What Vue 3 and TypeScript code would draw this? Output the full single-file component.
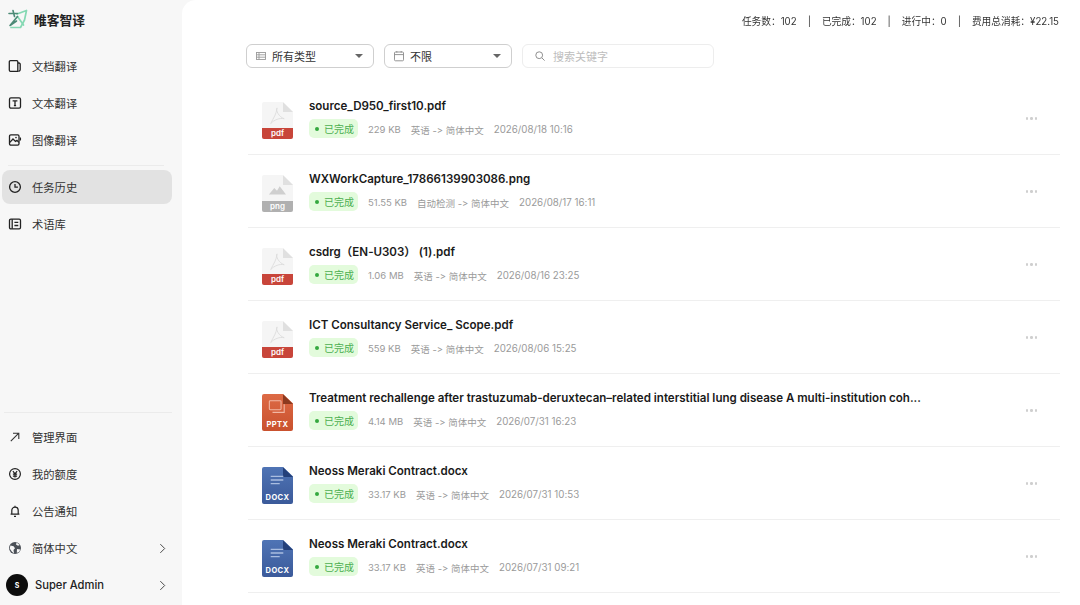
<script setup lang="ts">
type Kind = 'pdf' | 'png' | 'pptx' | 'docx'
interface Task { name: string; kind: Kind; size: string; langs: string; date: string }

const tasks: Task[] = [
  { name: 'source_D950_first10.pdf', kind: 'pdf', size: '229 KB', langs: '英语 -> 简体中文', date: '2026/08/18 10:16' },
  { name: 'WXWorkCapture_17866139903086.png', kind: 'png', size: '51.55 KB', langs: '自动检测 -> 简体中文', date: '2026/08/17 16:11' },
  { name: 'csdrg（EN-U303） (1).pdf', kind: 'pdf', size: '1.06 MB', langs: '英语 -> 简体中文', date: '2026/08/16 23:25' },
  { name: 'ICT Consultancy Service_ Scope.pdf', kind: 'pdf', size: '559 KB', langs: '英语 -> 简体中文', date: '2026/08/06 15:25' },
  { name: 'Treatment rechallenge after trastuzumab-deruxtecan–related interstitial lung disease A multi-institution coh...', kind: 'pptx', size: '4.14 MB', langs: '英语 -> 简体中文', date: '2026/07/31 16:23' },
  { name: 'Neoss Meraki Contract.docx', kind: 'docx', size: '33.17 KB', langs: '英语 -> 简体中文', date: '2026/07/31 10:53' },
  { name: 'Neoss Meraki Contract.docx', kind: 'docx', size: '33.17 KB', langs: '英语 -> 简体中文', date: '2026/07/31 09:21' },
]
const stats = ['任务数：102', '已完成：102', '进行中：0', '费用总消耗：¥22.15']
</script>

<template>
  <div class="app">
    <aside class="side">
      <div class="brand">
        <svg class="logo" width="20" height="20" viewBox="0 0 20 20" fill="none" stroke-linecap="round" stroke-linejoin="round">
          <path d="M9 5L18.500 1.500L16.500 11L12.500 18.500H3" stroke="#86d9b4" stroke-width="1.700" />
          <path d="M9.500 7.500L15.500 16" stroke="#86d9b4" stroke-width="1.700" />
          <path d="M1 4.500H9.500M5 1.500L6.500 7.500M9.500 7.500L2 16.500L8.500 12" stroke="#4c8a76" stroke-width="1.600" />
        </svg>
        <span>唯客智译</span>
      </div>

      <nav class="nav top">
        <a class="item">
          <svg class="ic" viewBox="0 0 14 14" fill="none" stroke="#222" stroke-width="1.300"><path d="M2.500 1.700H8.800A1 1 0 0 1 9.800 2.700V12.300H2.500A1.200 1.200 0 0 1 1.300 11.100V2.900A1.200 1.200 0 0 1 2.500 1.700Z" /><path d="M10 4H11A1.200 1.200 0 0 1 12.200 5.200V10.500A1.700 1.700 0 0 1 10.400 12.200" /></svg>
          文档翻译
        </a>
        <a class="item">
          <svg class="ic" viewBox="0 0 14 14" fill="none" stroke="#222" stroke-width="1.300"><rect x="1.500" y="1.900" width="11" height="10.200" rx="1.400" /><path d="M4.600 4.900H9.400M7 4.900V9.600M5.900 9.600H8.100" /></svg>
          文本翻译
        </a>
        <a class="item">
          <svg class="ic" viewBox="0 0 14 14" fill="none" stroke="#222" stroke-width="1.300"><rect x="1.500" y="1.900" width="9.500" height="10.200" rx="1.300" /><path d="M1.800 9.400L5 6L7.500 8.400L9 7.400L10.800 9.400" /><circle cx="8" cy="4.600" r=".8" fill="#222" stroke="none" /><path d="M12.400 4.500V7.500" /></svg>
          图像翻译
        </a>
        <div class="rule"></div>
        <a class="item active">
          <svg class="ic" viewBox="0 0 14 14" fill="none" stroke="#222" stroke-width="1.300"><circle cx="7" cy="7" r="5.400" /><path d="M7 3.900V7.200H9.900" /></svg>
          任务历史
        </a>
        <a class="item">
          <svg class="ic" viewBox="0 0 14 14" fill="none" stroke="#222" stroke-width="1.300"><rect x="1.500" y="2.200" width="11" height="9.600" rx="1.300" /><path d="M4.200 2.200V11.800M6.400 5.400H10.300M6.400 8.500H10.300" /></svg>
          术语库
        </a>
      </nav>

      <nav class="nav bottom">
        <div class="rule"></div>
        <a class="item">
          <svg class="ic" viewBox="0 0 14 14" fill="none" stroke="#333" stroke-width="1.100"><path d="M2.800 11.200L10.800 3.200M5 3.200H10.800V9" /></svg>
          管理界面
        </a>
        <a class="item">
          <svg class="ic" viewBox="0 0 14 14" fill="none" stroke="#222" stroke-width="1.200"><circle cx="7" cy="7" r="5.400" /><path d="M4.900 4.200L7 6.800L9.100 4.200M4.900 7.200H9.100M4.900 9.100H9.100M7 6.800V10.600" /></svg>
          我的额度
        </a>
        <a class="item">
          <svg class="ic" viewBox="0 0 14 14" fill="none" stroke="#222" stroke-width="1.200"><path d="M3.800 10V6.400A3.200 3.200 0 0 1 10.200 6.400V10M2.600 10.200H11.400M6 12.300H8M7 1.800V3" /></svg>
          公告通知
        </a>
        <a class="item">
          <svg class="ic" viewBox="0 0 14 14"><circle cx="7" cy="7" r="6" fill="#4b5057" /><path d="M2.400 4.500L5.600 5.200L7 7.200L5.500 9L6 12.400L3.800 10.600L1.700 7.500ZM8.600 1.600L8 3.600L10 4.800L11.800 4ZM9 8L12.400 8.600L10.800 11.200L8.800 11.800Z" fill="#f7f7f7" /></svg>
          <span class="grow">简体中文</span>
          <svg class="chev" viewBox="0 0 8 12" fill="none" stroke="#444" stroke-width="1.100"><path d="M1.500 1L6.500 6L1.500 11" /></svg>
        </a>
        <a class="item user">
          <span class="avatar">S</span>
          <span class="grow uname">Super Admin</span>
          <svg class="chev" viewBox="0 0 8 12" fill="none" stroke="#444" stroke-width="1.100"><path d="M1.500 1L6.500 6L1.500 11" /></svg>
        </a>
      </nav>
    </aside>

    <main class="main">
      <div class="stats">
        <template v-for="(s, i) in stats" :key="s">
          <span v-if="i > 0" class="sep">|</span>
          <span>{{ s }}</span>
        </template>
      </div>

      <div class="filters">
        <div class="select">
          <svg class="sic" viewBox="0 0 12 12" fill="none" stroke="#9a9a9a" stroke-width=".9"><rect x="1.500" y="2.500" width="9" height="7" /><path d="M1.500 4.800H10.500M1.500 7.200H10.500M4 2.500V9.500" /></svg>
          <span class="grow">所有类型</span>
          <i class="caret"></i>
        </div>
        <div class="select">
          <svg class="sic" viewBox="0 0 12 12" fill="none" stroke="#8a8a8a" stroke-width=".9"><rect x="1.500" y="2" width="9" height="8.800" rx="1" /><path d="M1.500 4.600H10.500M3.800 1V2.600M8.200 1V2.600" /></svg>
          <span class="grow">不限</span>
          <i class="caret"></i>
        </div>
        <div class="search">
          <svg class="sic" viewBox="0 0 12 12" fill="none" stroke="#8f8f8f" stroke-width="1"><circle cx="5.200" cy="5.200" r="3.400" /><path d="M7.800 7.800L10.600 10.600" /></svg>
          <span>搜索关键字</span>
        </div>
      </div>

      <div class="list">
        <div v-for="(t, i) in tasks" :key="i" class="row">
          <div class="file" :class="t.kind">
            <div class="sheet">
              <i class="fold"></i>
              <svg v-if="t.kind === 'pdf'" class="glyph" viewBox="0 0 20 20" fill="none" stroke="#dcdcdc" stroke-width="1"><path d="M10 1C8.500 4 12 11 18 13C13 12 7 14 3 18.500C6 12 9.500 8 10 1Z" /></svg>
              <svg v-else-if="t.kind === 'png'" class="glyph" viewBox="0 0 20 20"><path d="M1 16L7 9L10 12L13 7L20 16Z" fill="#cfcfcf" /></svg>
              <svg v-else-if="t.kind === 'pptx'" class="glyph" viewBox="0 0 20 20" fill="none" stroke="#f2b7a3" stroke-width="1.200"><rect x="1.500" y="3" width="13" height="10" rx="1" /><path d="M5 16H18V7" /></svg>
              <svg v-else class="glyph" viewBox="0 0 20 20" fill="none" stroke="#a9bde0" stroke-width="1.400"><path d="M3 6H17M3 10H17M3 14H13" /></svg>
            </div>
            <span class="tag">{{ t.kind === 'pptx' || t.kind === 'docx' ? t.kind.toUpperCase() : t.kind }}</span>
          </div>
          <div class="info">
            <div class="name">{{ t.name }}</div>
            <div class="meta">
              <span class="badge"><i class="dot"></i>已完成</span>
              <span class="mtext">{{ t.size }}</span>
              <span class="mtext">{{ t.langs }}</span>
              <span class="mtext date">{{ t.date }}</span>
            </div>
          </div>
          <div class="more"><i></i><i></i><i></i></div>
        </div>
      </div>
    </main>
  </div>
</template>

<style>
html, body { margin: 0; background: #f7f7f7; overflow: hidden; }
</style>

<style scoped>
.app {
  display: flex;
  width: 1080px;
  height: 605px;
  overflow: hidden;
  background: #f7f7f7;
  font-family: Inter, "Noto Sans CJK SC", sans-serif;
  font-variant-ligatures: none;
  font-feature-settings: "calt" 0, "liga" 0;
  color: #1f1f1f;
}
.side {
  width: 182px;
  flex: none;
  display: flex;
  flex-direction: column;
  box-sizing: border-box;
  padding: 9px 10px 0 2px;
}
.brand {
  display: flex;
  align-items: center;
  gap: 6px;
  height: 20px;
  padding-left: 6px;
  font-size: 12.750px;
  font-weight: 600;
  color: #222;
}
.logo { flex: none; }
.nav { display: flex; flex-direction: column; }
.top { margin-top: 20px; }
.bottom { margin-top: auto; padding-bottom: 3px; }
.item {
  display: flex;
  align-items: center;
  gap: 10px;
  height: 34px;
  margin-bottom: 3px;
  padding-left: 6px;
  border-radius: 8px;
  font-size: 11.300px;
  color: #333;
}
.ic { width: 14px; height: 14px; flex: none; }
.active { background: #e2e2e2; }
.rule {
  height: 1px;
  background: #ebebeb;
  margin: 5px 8px 4px 6px;
}
.bottom .rule { margin: 0 0 7px 2px; }
.grow { flex: 1; }
.chev { width: 7px; height: 11px; margin-right: 6px; flex: none; }
.user { gap: 7px; padding-left: 4px; margin-bottom: 0; }
.avatar {
  width: 22px;
  height: 22px;
  flex: none;
  border-radius: 50%;
  background: #0d0d0d;
  color: #fff;
  font-size: 7px;
  font-weight: 700;
  display: flex;
  align-items: center;
  justify-content: center;
}
.uname { font-size: 11.200px; font-weight: 500; color: #222; }
.main {
  flex: 1;
  min-width: 0;
  background: #fff;
  border-top-left-radius: 14px;
  box-sizing: border-box;
  padding: 0 20px 0 66px;
}
.stats {
  display: flex;
  justify-content: flex-end;
  gap: 11px;
  height: 42px;
  margin-right: 1px;
  align-items: center;
  font-size: 9.700px;
  color: #333;
  will-change: transform;
}
.filters { display: flex; gap: 10px; margin: 2px 0 0 -2px; }
.select, .search {
  height: 22px;
  border: 1px solid #cfcfcf;
  border-radius: 6px;
  display: flex;
  align-items: center;
  font-size: 11px;
  color: #333;
}
.select { width: 126px; }
.search {
  width: 190px;
  border-color: #ededed;
  color: #bdbdbd;
}
.sic { width: 12px; height: 12px; margin: 0 5px 0 8px; flex: none; }
.search .sic { margin: 0 7px 0 11px; }
.caret {
  width: 0;
  height: 0;
  border-left: 4px solid transparent;
  border-right: 4px solid transparent;
  border-top: 4.500px solid #666;
  margin-right: 10px;
}
.list { margin-top: 14px; }
.row {
  height: 72px;
  border-bottom: 1px solid #efefef;
  display: flex;
  align-items: flex-start;
  padding-left: 14px;
}
.file {
  position: relative;
  width: 31px;
  height: 37px;
  margin-top: 20px;
  flex: none;
}
.sheet {
  position: absolute;
  inset: 0;
  border-radius: 2px;
  background: #f5f5f5;
  clip-path: polygon(0 0, 68% 0, 100% 26%, 100% 100%, 0 100%);
}
.fold {
  position: absolute;
  right: 0;
  top: 0;
  width: 10px;
  height: 10px;
  background: #e0e0e0;
  clip-path: polygon(0 0, 100% 100%, 0 100%);
}
.glyph {
  position: absolute;
  left: 6px;
  top: 4px;
  width: 18px;
  height: 20px;
}
.tag {
  position: absolute;
  left: 0;
  right: 0;
  bottom: 0;
  height: 11px;
  border-radius: 0 0 2px 2px;
  color: #fff;
  font-size: 8px;
  font-weight: 600;
  line-height: 11px;
  text-align: center;
}
.pdf .tag { background: #c8453a; }
.png .tag { background: #b0b0b0; }
.pptx .sheet { background: linear-gradient(#dd6a45, #c9512e); }
.pptx .fold { background: #8c3a20; }
.pptx .tag, .docx .tag { background: transparent; height: 13px; line-height: 13px; font-size: 7.500px; font-weight: 700; letter-spacing: .4px; }
.docx .sheet { background: linear-gradient(#4f74b5, #3b5a9a); }
.docx .fold { background: #24407a; }
.docx .glyph, .pptx .glyph { top: 3px; }
.info {
  flex: 1;
  min-width: 0;
  margin-left: 16px;
  padding-top: 16px;
}
.name {
  font-size: 11.550px;
  font-weight: 600;
  line-height: 16px;
  color: #1a1a1a;
  white-space: nowrap;
}
.meta {
  display: flex;
  align-items: center;
  gap: 10px;
  margin-top: 5px;
  font-size: 9.500px;
  color: #9a9a9a;
}
.mtext { padding-top: 2px; }
.date { font-size: 9.750px; }
.badge {
  display: flex;
  align-items: center;
  gap: 5px;
  height: 19px;
  padding: 0 4px 0 6px;
  border-radius: 5px;
  background: #e3fbdc;
  color: #4caf50;
  font-size: 10px;
}
.dot {
  width: 4px;
  height: 4px;
  border-radius: 50%;
  background: #35a83f;
}
.more {
  display: flex;
  gap: 2px;
  margin: 35px 23px 0 0;
}
.more i {
  width: 2.500px;
  height: 2.500px;
  border-radius: 50%;
  background: #cfcfcf;
}
</style>
